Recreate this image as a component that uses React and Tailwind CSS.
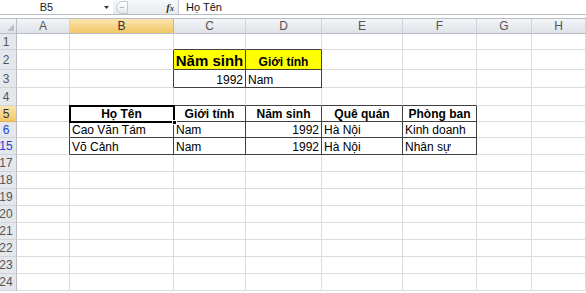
import React from 'react';

const cols = ['A', 'B', 'C', 'D', 'E', 'F', 'G', 'H'];

const rows = [
  { n: '1', h: 'h-[16px]' },
  { n: '2', h: 'h-[20px]' },
  { n: '3', h: 'h-[18px]' },
  { n: '4', h: 'h-[18px]' },
  { n: '5', h: 'h-[16px]', sel: true },
  { n: '6', h: 'h-[16px]', blue: true },
  { n: '15', h: 'h-[17px]', blue: true },
  { n: '17', h: 'h-[17px]' },
  { n: '18', h: 'h-[17px]' },
  { n: '19', h: 'h-[17px]' },
  { n: '20', h: 'h-[17px]' },
  { n: '21', h: 'h-[17px]' },
  { n: '22', h: 'h-[17px]' },
  { n: '23', h: 'h-[17px]' },
  { n: '24', h: 'h-[17px]' },
];

// cell contents: align l/r/c, bold, big
const cells = {
  C2: { t: 'Năm sinh', a: 'c', b: true, big: true, y: true },
  D2: { t: 'Giới tính', a: 'c', b: true, y: true },
  C3: { t: '1992', a: 'r' },
  D3: { t: 'Nam', a: 'l' },
  B5: { t: 'Họ Tên', a: 'c', b: true },
  C5: { t: 'Giới tính', a: 'c', b: true },
  D5: { t: 'Năm sinh', a: 'c', b: true },
  E5: { t: 'Quê quán', a: 'c', b: true },
  F5: { t: 'Phòng ban', a: 'c', b: true },
  B6: { t: 'Cao Văn Tám', a: 'l' },
  C6: { t: 'Nam', a: 'l' },
  D6: { t: '1992', a: 'r' },
  E6: { t: 'Hà Nội', a: 'l' },
  F6: { t: 'Kinh doanh', a: 'l' },
  B15: { t: 'Võ Cảnh', a: 'l' },
  C15: { t: 'Nam', a: 'l' },
  D15: { t: '1992', a: 'r' },
  E15: { t: 'Hà Nội', a: 'l' },
  F15: { t: 'Nhân sự', a: 'l' },
};

const tableKeys = [];
['5', '6', '15'].forEach((r) => ['B', 'C', 'D', 'E', 'F'].forEach((c) => tableKeys.push(c + r)));
const box = ['C2', 'D2', 'C3', 'D3'];

const darkRight = new Set([...box, ...tableKeys, 'B2', 'B3', 'A5', 'A6', 'A15']);
const darkBottom = new Set([...box, ...tableKeys, 'C1', 'D1', 'B4', 'C4', 'D4', 'E4', 'F4']);

const gridCols = 'grid grid-cols-[17px_53px_104px_72px_76px_81px_74px_55px_54px]';

function Cell({ id }) {
  const c = cells[id];
  const right = darkRight.has(id) ? 'border-r-[#404040]' : 'border-r-[#dadcdd]';
  const bottom = darkBottom.has(id) ? 'border-b-[#404040]' : 'border-b-[#dadcdd]';
  const align = !c ? '' : c.a === 'r' ? 'justify-end pr-[2px]' : c.a === 'c' ? 'justify-center' : 'justify-start pl-[2px]';
  return (
    <div
      className={`flex items-end overflow-visible whitespace-nowrap border-r border-b ${right} ${bottom} ${c && c.y ? 'bg-[#ffff00]' : 'bg-white'} ${align}`}
    >
      {c && (
        <span
          className={`leading-[14px] text-black ${c.big ? 'text-[15px] leading-[17px]' : 'text-[12px]'} ${c.b ? 'font-bold' : ''}`}
        >
          {c.t}
        </span>
      )}
    </div>
  );
}

export default function App() {
  return (
    <div
      className="relative h-[293px] w-[586px] overflow-hidden bg-white"
      style={{ fontFamily: '"Liberation Sans", Arial, sans-serif' }}
    >
      {/* formula bar */}
      <div className="flex h-[15px] border-b border-[#b7bcc4] bg-white">
        <div className="relative flex w-[113px] items-center justify-center pr-[20px] text-[11px] text-[#222]">
          B5
          <svg className="absolute right-[4px] top-[6px]" width="5" height="3" viewBox="0 0 5 3">
            <path d="M0 0h5L2.5 3z" fill="#333" />
          </svg>
        </div>
        <div className="flex w-[65px] items-center bg-gradient-to-b from-[#f7f8fa] to-[#e7eaee] pl-[3px]">
          <div className="flex h-[13px] w-[12px] items-center justify-center rounded-l-full border border-[#c4c9d0] bg-gradient-to-b from-white to-[#e4e7eb]">
            <div className="h-px w-[4px] bg-[#b0b5bd]" />
          </div>
          <span
            className="ml-auto mr-[4px] text-[11px] font-bold italic text-[#333]"
            style={{ fontFamily: '"Liberation Serif", serif' }}
          >
            f<span className="text-[8px]">x</span>
          </span>
        </div>
        <div className="flex flex-1 items-center border-l border-[#c4c9d0] pl-[7px] text-[11px] text-[#111]">
          Họ Tên
        </div>
      </div>
      <div className="h-[3px] bg-white" />

      {/* column headers */}
      <div className={`${gridCols} h-[16px] border-y border-[#b8bec7]`}>
        <div className="relative border-r border-[#b8bec7] bg-gradient-to-b from-[#f4f5f7] to-[#dfe3e8]">
          <svg className="absolute bottom-[2px] right-[2px]" width="7" height="7" viewBox="0 0 7 7">
            <path d="M7 0v7H0z" fill="#b9bec6" />
          </svg>
        </div>
        {cols.map((c) => (
          <div
            key={c}
            className={`flex items-center justify-center border-r text-[12px] leading-none ${
              c === 'B'
                ? 'border-[#e2b058] bg-gradient-to-b from-[#fbe5ae] to-[#f3c663] text-[#333]'
                : 'border-[#d0d4da] bg-gradient-to-b from-[#f4f5f7] to-[#dfe3e8] text-[#555]'
            }`}
          >
            {c}
          </div>
        ))}
      </div>

      {/* rows */}
      {rows.map((r) => (
        <div key={r.n} className={`${gridCols} ${r.h}`}>
          <div
            className={`flex items-center justify-center border-r border-b pr-[4px] text-[12px] leading-none ${
              r.sel
                ? 'border-r-[#b8bec7] border-b-[#e2b058] bg-gradient-to-b from-[#fbe5ae] to-[#f3c663] text-[#333]'
                : 'border-r-[#b8bec7] border-b-[#d0d4da] bg-[#e4e8ed]'
            } ${r.blue ? 'text-[#2840d8]' : r.sel ? '' : 'text-[#555]'}`}
          >
            {r.n}
          </div>
          {cols.map((c) => (
            <Cell key={c} id={c + r.n} />
          ))}
        </div>
      ))}

      {/* active cell outline B5 */}
      <div className="pointer-events-none absolute left-[69px] top-[105px] h-[18px] w-[106px] border-2 border-black">
        <div className="absolute -bottom-[4px] -right-[4px] h-[5px] w-[5px] border border-white bg-black" />
      </div>
    </div>
  );
}
